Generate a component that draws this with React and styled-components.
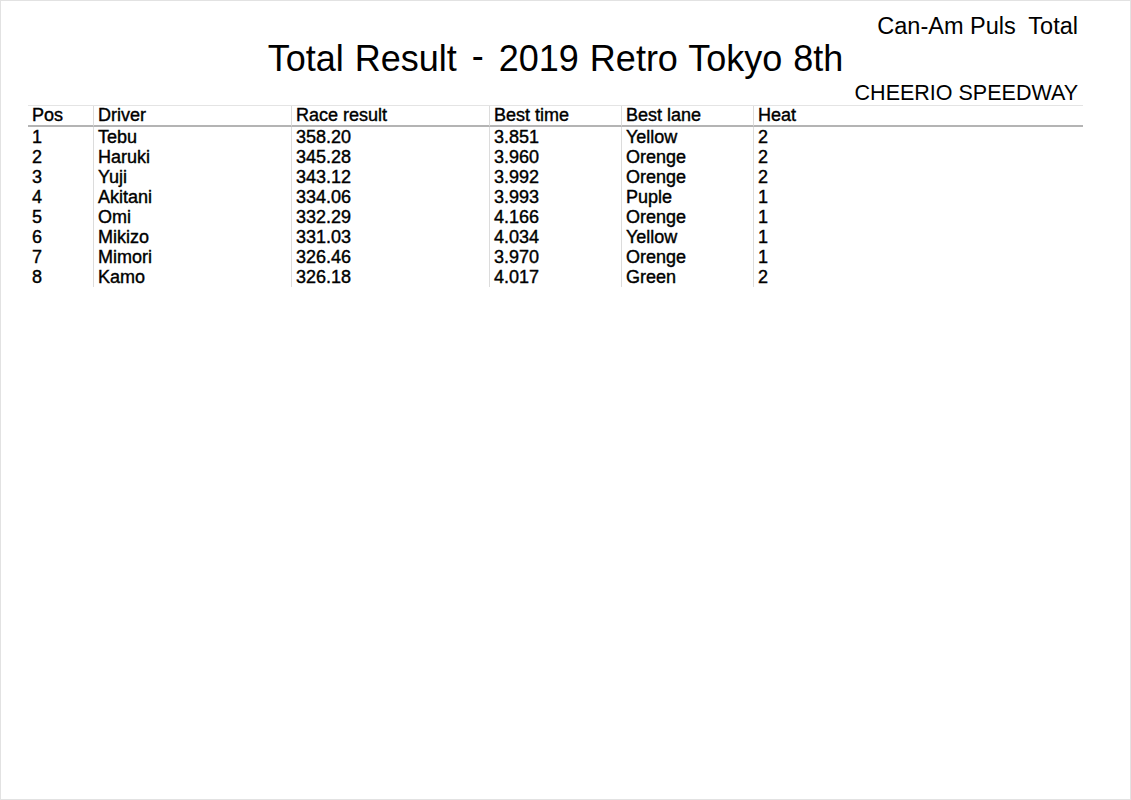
import React from "react";
import styled, { createGlobalStyle } from "styled-components";

const GlobalStyle = createGlobalStyle`
  html, body { margin: 0; padding: 0; background: #ffffff; }
  body { font-family: "Liberation Sans", Arial, sans-serif; color: #000; }
`;

const Page = styled.div`
  box-sizing: border-box;
  width: 1131px;
  height: 800px;
  border: 1px solid #e2e2e2;
  padding: 12px 47px 0 27px;
  background: #fff;
`;

const Header = styled.header`
  display: flex;
  flex-direction: column;
`;

const Category = styled.div`
  text-align: right;
  padding-right: 5px;
  font-size: 23.5px;
  line-height: 26px;
  white-space: pre;
`;

const Title = styled.h1`
  margin: 0;
  text-align: center;
  font-weight: normal;
  font-size: 36px;
  line-height: 40px;
  word-spacing: 1px;
`;

const Dash = styled.span`
  display: inline-block;
  margin: 0 4px;
  transform: translateY(-3px);
`;

const Venue = styled.div`
  text-align: right;
  padding-right: 5px;
  margin-top: 2px;
  font-size: 21.5px;
  line-height: 24px;
`;

const Table = styled.div`
  display: grid;
  grid-template-columns: 65px 198px 198px 132px 132px 1fr;
  border-top: 1px solid #e4e4e4;
  font-size: 18px;
  -webkit-text-stroke: 0.4px #000;
`;

const Cell = styled.div`
  box-sizing: border-box;
  padding-left: 4px;
  height: ${(p) => (p.$head ? "21px" : "20px")};
  line-height: ${(p) => (p.$head ? "19px" : "20px")};
  border-left: ${(p) => (p.$first ? "none" : "1px solid #dcdcdc")};
  border-bottom: ${(p) => (p.$head ? "2px solid #b4b4b4" : "none")};
  white-space: nowrap;
`;

const columns = ["Pos", "Driver", "Race result", "Best time", "Best lane", "Heat"];

const rows = [
  ["1", "Tebu", "358.20", "3.851", "Yellow", "2"],
  ["2", "Haruki", "345.28", "3.960", "Orenge", "2"],
  ["3", "Yuji", "343.12", "3.992", "Orenge", "2"],
  ["4", "Akitani", "334.06", "3.993", "Puple", "1"],
  ["5", "Omi", "332.29", "4.166", "Orenge", "1"],
  ["6", "Mikizo", "331.03", "4.034", "Yellow", "1"],
  ["7", "Mimori", "326.46", "3.970", "Orenge", "1"],
  ["8", "Kamo", "326.18", "4.017", "Green", "2"],
];

export default function App() {
  return (
    <>
      <GlobalStyle />
      <Page>
        <Header>
          <Category>{"Can-Am Puls  Total"}</Category>
          <Title>
            Total Result <Dash>-</Dash> 2019 Retro Tokyo 8th
          </Title>
          <Venue>CHEERIO SPEEDWAY</Venue>
        </Header>
        <Table>
          {columns.map((c, i) => (
            <Cell key={c} $head $first={i === 0}>
              {c}
            </Cell>
          ))}
          {rows.map((r) =>
            r.map((v, i) => (
              <Cell key={r[0] + "-" + i} $first={i === 0}>
                {v}
              </Cell>
            ))
          )}
        </Table>
      </Page>
    </>
  );
}
